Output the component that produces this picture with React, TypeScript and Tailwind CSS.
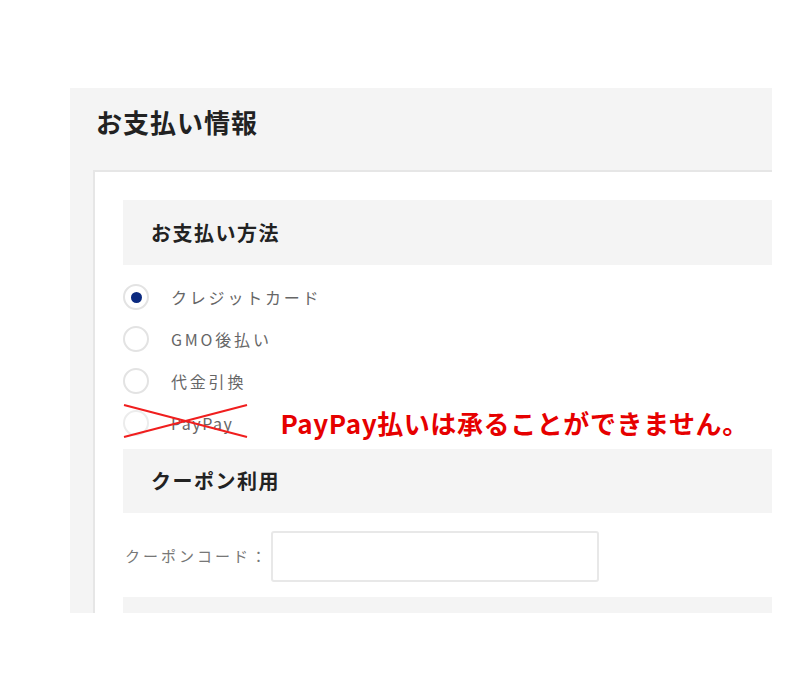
import React from "react";

function Radio({ checked, faded }: { checked?: boolean; faded?: boolean }) {
  return (
    <div
      className={
        "w-[26px] h-[26px] shrink-0 rounded-full border-2 flex items-center justify-center bg-white " +
        (faded ? "border-[#ececec]" : "border-[#e3e3e3]")
      }
    >
      {checked && <div className="w-[11px] h-[11px] rounded-full bg-[#0b2a80]" />}
    </div>
  );
}

export default function App() {
  const rows = [
    { label: "クレジットカード", checked: true },
    { label: "GMO後払い" },
    { label: "代金引換" },
  ];
  return (
    <div className="min-h-[700px] bg-white pt-[88px] pl-[70px] font-['Noto_Sans_CJK_JP','Noto_Sans',sans-serif]">
      <div className="w-[702px] h-[525px] overflow-hidden bg-[#f4f4f4]">
        <h2 className="h-[82px] pl-[26px] pt-[19px] text-[26px] leading-[30px] font-bold tracking-[1px] text-[#222]">
          お支払い情報
        </h2>
        <div className="ml-[23px] border-l-2 border-t-2 border-[#e6e6e6] bg-white pl-[28px] pt-[28px] min-h-[600px]">
          <div className="h-[65px] bg-[#f4f4f4] flex items-center pl-[28px] text-[20px] font-bold tracking-[1.5px] text-[#222]">
            お支払い方法
          </div>
          <div className="mt-[11px]">
            {rows.map((r) => (
              <div key={r.label} className="h-[42px] flex items-center">
                <Radio checked={r.checked} />
                <span className="ml-[22px] text-[16px] tracking-[2.8px] text-[#666]">{r.label}</span>
              </div>
            ))}
            <div className="relative h-[42px] flex items-center">
              <Radio faded />
              <span className="ml-[22px] text-[16px] tracking-[1.5px] text-[#666]">PayPay</span>
              <span className="ml-[47px] text-[26px] leading-[30px] font-bold tracking-[0.6px] text-[#e60000]">
                PayPay払いは承ることができません。
              </span>
              <svg
                className="absolute left-0 top-0"
                width="126"
                height="42"
                viewBox="0 0 126 42"
              >
                <line x1="1" y1="3" x2="124" y2="35" stroke="#f01e1e" strokeWidth="2" />
                <line x1="1" y1="35" x2="124" y2="3" stroke="#f01e1e" strokeWidth="2" />
              </svg>
            </div>
          </div>
          <div className="mt-[5px] h-[64px] bg-[#f4f4f4] flex items-center pl-[28px] text-[20px] font-bold tracking-[1.5px] text-[#222]">
            クーポン利用
          </div>
          <div className="mt-[18px] flex items-center pl-[2px]">
            <span className="text-[15px] tracking-[3px] text-[#777]">クーポンコード：</span>
            <input
              type="text"
              className="ml-[2px] w-[328px] h-[51px] border-2 border-[#e8e8e8] rounded-[3px] bg-white outline-none"
            />
          </div>
          <div className="mt-[15px] h-[40px] bg-[#f4f4f4]" />
        </div>
      </div>
    </div>
  );
}
